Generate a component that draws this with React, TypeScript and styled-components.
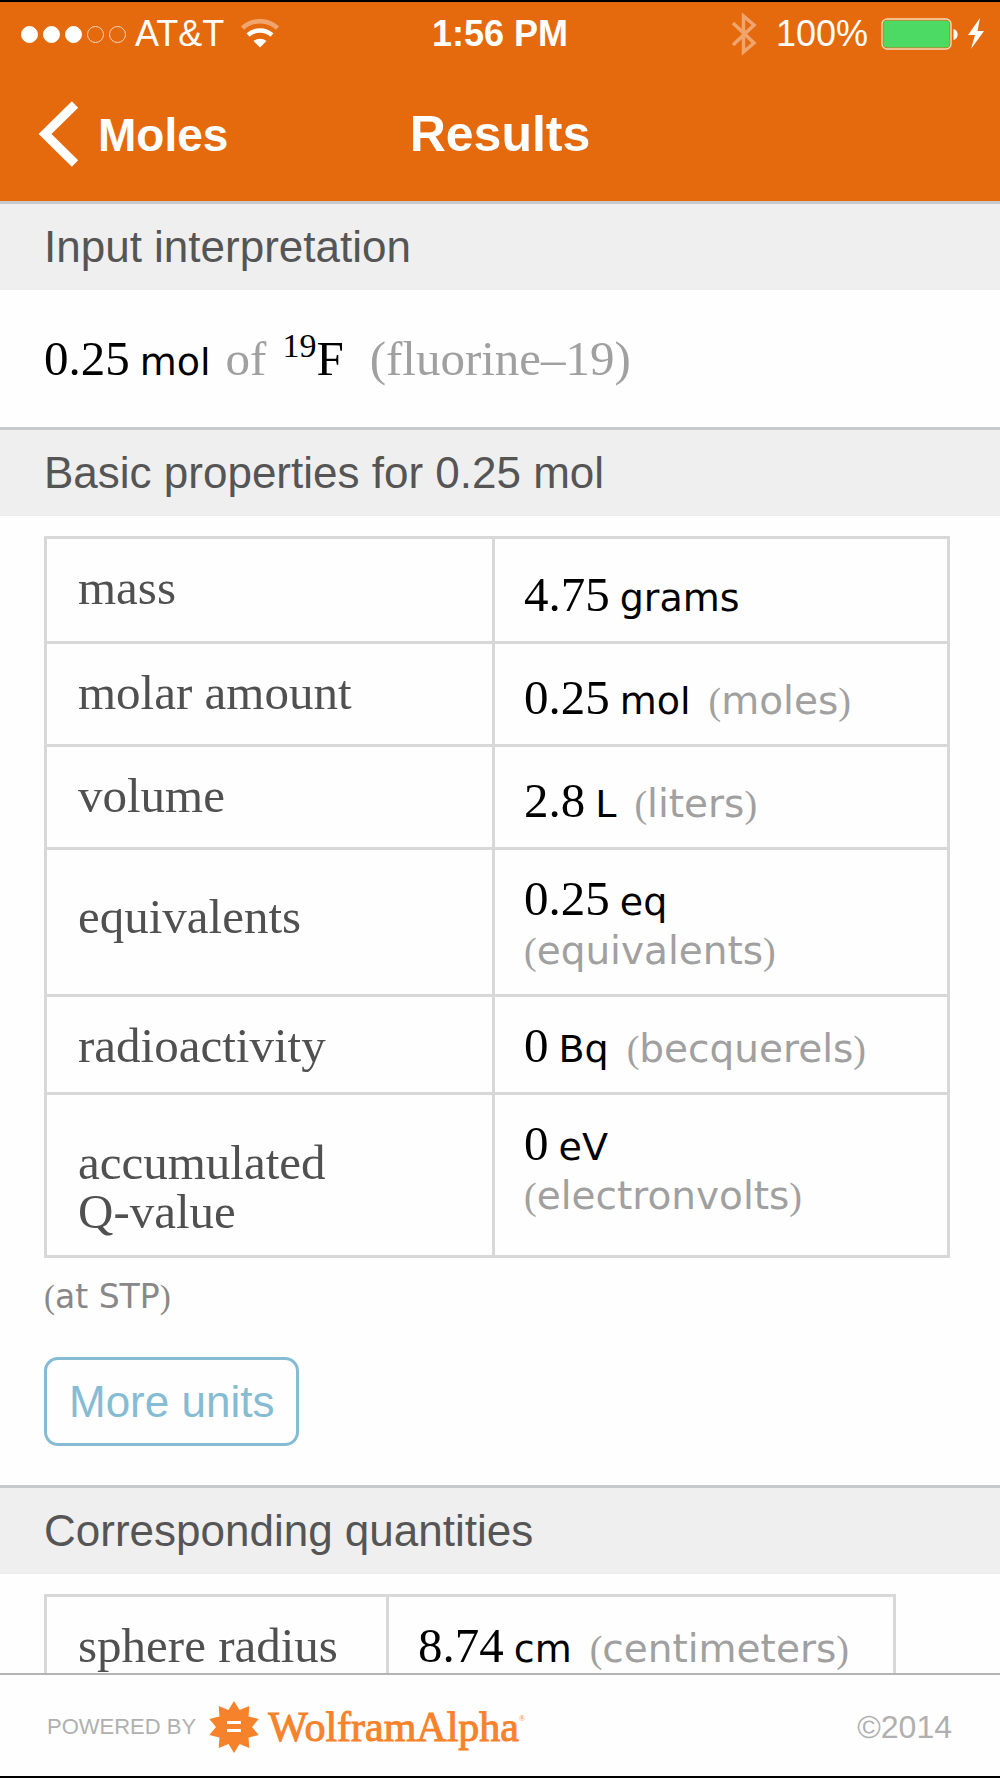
import React from "react";
import styled, { createGlobalStyle } from "styled-components";

const sans = `"Liberation Sans", Arial, sans-serif`;
const serif = `"Liberation Serif", "Times New Roman", serif`;
const unitSans = `"DejaVu Sans", Verdana, sans-serif`;

const GlobalStyle = createGlobalStyle`
  *, *::before, *::after { box-sizing: border-box; }
  body { margin: 0; background: #000; }
`;

const Screen = styled.div`
  display: flex;
  flex-direction: column;
  height: 100vh;
  border-top: 2px solid #000;
  border-bottom: 2px solid #000;
  background: #fefefe;
  font-family: ${sans};
`;

const Header = styled.header`
  flex: none;
  background: #e5690d;
  color: #fff;
`;

const StatusBar = styled.div`
  display: grid;
  grid-template-columns: minmax(0, 1fr) auto minmax(0, 1fr);
  align-items: center;
  height: 64px;
  padding: 0 15px;
  font-size: 36px;
  line-height: 40px;
`;

const StatusGroup = styled.div<{ $end?: boolean }>`
  display: flex;
  align-items: center;
  justify-content: ${(p) => (p.$end ? "flex-end" : "flex-start")};
`;

const Signal = styled.div`
  display: flex;
  gap: 5px;
  margin: 0 9px 0 6px;
`;

const Dot = styled.span<{ $on: boolean }>`
  width: 17px;
  height: 17px;
  border-radius: 50%;
  border: 1px solid ${(p) => (p.$on ? "#fff" : "#f8d6bc")};
  background: ${(p) => (p.$on ? "#fff" : "transparent")};
`;

const Time = styled.time`
  font-weight: 700;
`;

const Icon = styled.svg<{ $left?: number }>`
  display: block;
  flex: none;
  margin-left: ${(p) => p.$left ?? 0}px;
`;

const Percent = styled.span`
  margin: 0 13px 0 19px;
`;

const NavBar = styled.nav`
  display: grid;
  grid-template-columns: 1fr auto 1fr;
  align-items: center;
  height: 135px;
  padding: 0 38px;
`;

const BackButton = styled.button`
  display: flex;
  align-items: center;
  justify-self: start;
  gap: 18px;
  padding: 0;
  border: 0;
  background: none;
  color: inherit;
  font: 700 46px/58px ${sans};
`;

const NavLabel = styled.span`
  padding-top: 2px;
`;

const Title = styled.h1`
  margin: 0;
  font-size: 50px;
  line-height: 58px;
`;

const Main = styled.main`
  flex: 1;
  min-height: 0;
  overflow-y: auto;
  scrollbar-width: none;
`;

const SectionTitle = styled.h2`
  margin: 0;
  padding: 0 44px;
  border-top: 3px solid #c6cacd;
  border-bottom: 1px solid #ebecee;
  background: #efefef;
  color: #555;
  font-size: 44px;
  font-weight: 400;
  line-height: 85px;
`;

const SectionBody = styled.div`
  padding: 20px 50px 39px 44px;
`;

const Interpretation = styled.p`
  margin: 0;
  padding: 44px;
  color: #000;
  font-family: ${serif};
  font-size: 49px;
  line-height: 49px;
`;

const Muted = styled.span<{ $left: number }>`
  margin-left: ${(p) => p.$left}px;
  color: #a0a0a0;
`;

const Isotope = styled.sup`
  margin-left: 16px;
  font-size: 34px;
  line-height: 0;
  vertical-align: 18px;
`;

const Unit = styled.span`
  margin-left: 10px;
  font-family: ${unitSans};
  font-size: 38px;
  line-height: 0;
`;

const HintBox = styled.span<{ $stacked?: boolean }>`
  display: ${(p) => (p.$stacked ? "block" : "inline")};
  margin-left: ${(p) => (p.$stacked ? 0 : 18)}px;
  color: #a0a0a0;
  white-space: nowrap;
`;

const Paren = styled.span`
  font-family: ${serif};
  font-size: 38px;
  line-height: 0;
`;

const HintWord = styled.span`
  font-family: ${unitSans};
  font-size: 39px;
  line-height: 0;
`;

const Table = styled.table<{ $width: string }>`
  width: ${(p) => p.$width};
  border-collapse: collapse;
  table-layout: fixed;
  font-family: ${serif};
  font-size: 49px;
  line-height: 49px;
`;

type Align = "top" | "middle" | "bottom";

const Row = styled.tr<{ $height: number }>`
  height: ${(p) => p.$height}px;
`;

const LabelCell = styled.th<{ $align: Align; $width: string }>`
  width: ${(p) => p.$width};
  padding: 24px 30px ${(p) => (p.$align === "middle" ? 36 : 19)}px 31px;
  border: 3px solid #d8d8d8;
  color: #505050;
  font-weight: 400;
  text-align: left;
  white-space: pre-line;
  vertical-align: ${(p) => p.$align};
`;

const ValueCell = styled.td<{ $align: Align }>`
  padding: 24px 29px 22px;
  border: 3px solid #d8d8d8;
  color: #000;
  vertical-align: ${(p) => p.$align};
`;

const Note = styled.p`
  margin: 14px 0 36px;
  color: #888;
  font-family: ${unitSans};
  font-size: 33px;
  line-height: 49px;
`;

const NoteParen = styled.span`
  font-family: ${serif};
  line-height: 0;
`;

const MoreButton = styled.button`
  display: block;
  padding: 0 22px;
  border: 3px solid #85bcd3;
  border-radius: 14px;
  background: #fefefe;
  color: #85bcd3;
  font: 400 44px/83px ${sans};
`;

const Footer = styled.footer`
  display: flex;
  flex: none;
  align-items: center;
  height: 103px;
  padding: 3px 48px 0 47px;
  border-top: 2px solid #b3b3b3;
  background: #fefefe;
  color: #b0b0b0;
`;

const Powered = styled.span`
  font-size: 22px;
`;

const BrandLink = styled.a`
  display: flex;
  align-items: center;
  gap: 8px;
  margin-left: 12px;
  color: #f6832b;
  text-decoration: none;
`;

const Wordmark = styled.span`
  font-family: ${serif};
  font-size: 42px;
  line-height: 48px;
  -webkit-text-stroke: 1px #f6832b;
`;

const Registered = styled.sup`
  font-size: 8px;
  line-height: 0;
  vertical-align: 20px;
  -webkit-text-stroke: 0;
`;

const Copyright = styled.span`
  margin-left: auto;
  font-size: 32px;
`;

interface Property {
  label: string;
  amount: string;
  unit: string;
  hint?: string;
  stacked?: boolean;
  height: number;
  labelAlign: Align;
  valueAlign: Align;
}

const basicProperties: Property[] = [
  { label: "mass", amount: "4.75", unit: "grams", height: 105, labelAlign: "top", valueAlign: "bottom" },
  { label: "molar amount", amount: "0.25", unit: "mol", hint: "moles", height: 103, labelAlign: "top", valueAlign: "bottom" },
  { label: "volume", amount: "2.8", unit: "L", hint: "liters", height: 103, labelAlign: "top", valueAlign: "bottom" },
  { label: "equivalents", amount: "0.25", unit: "eq", hint: "equivalents", stacked: true, height: 147, labelAlign: "middle", valueAlign: "top" },
  { label: "radioactivity", amount: "0", unit: "Bq", hint: "becquerels", height: 98, labelAlign: "top", valueAlign: "top" },
  { label: "accumulated\nQ-value", amount: "0", unit: "eV", hint: "electronvolts", stacked: true, height: 163, labelAlign: "bottom", valueAlign: "top" },
];

const quantities: Property[] = [
  { label: "sphere radius", amount: "8.74", unit: "cm", hint: "centimeters", height: 103, labelAlign: "top", valueAlign: "top" },
];

function PropertyTable({ rows, width, labelWidth }: { rows: Property[]; width: string; labelWidth: string }) {
  return (
    <Table $width={width}>
      <tbody>
        {rows.map((r) => (
          <Row key={r.label} $height={r.height}>
            <LabelCell scope="row" $align={r.labelAlign} $width={labelWidth}>
              {r.label}
            </LabelCell>
            <ValueCell $align={r.valueAlign}>
              {r.amount}
              <Unit>{r.unit}</Unit>
              {r.hint && (
                <HintBox $stacked={r.stacked}>
                  <Paren>(</Paren>
                  <HintWord>{r.hint}</HintWord>
                  <Paren>)</Paren>
                </HintBox>
              )}
            </ValueCell>
          </Row>
        ))}
      </tbody>
    </Table>
  );
}

// Ten-pointed star: outer and inner vertices alternate every 18 degrees.
const starPoints = Array.from({ length: 20 }, (_, i) => {
  const radius = i % 2 === 0 ? 26 : 18;
  const angle = (i * Math.PI) / 10 - Math.PI / 2;
  return `${(26 + radius * Math.cos(angle)).toFixed(2)},${(26 + radius * Math.sin(angle)).toFixed(2)}`;
}).join(" ");

export default function App() {
  return (
    <>
      <GlobalStyle />
      <Screen>
        <Header>
          <StatusBar>
            <StatusGroup>
              <Signal role="img" aria-label="Signal strength">
                {[true, true, true, false, false].map((on, i) => (
                  <Dot key={i} $on={on} />
                ))}
              </Signal>
              <span>AT&amp;T</span>
              <Icon $left={16} width="40" height="30" viewBox="0 0 40 30" fill="none" aria-hidden="true">
                <path d="M2.5 9 A26 26 0 0 1 37.5 9" stroke="#fff" strokeOpacity=".4" strokeWidth="4.5" />
                <path d="M8 16 A18 18 0 0 1 32 16" stroke="#fff" strokeWidth="4.5" />
                <path d="M20 28.5 L13.5 22 A11 11 0 0 1 26.5 22 Z" fill="#fff" />
              </Icon>
            </StatusGroup>
            <Time>1:56 PM</Time>
            <StatusGroup $end>
              <Icon width="26" height="44" viewBox="0 0 26 44" fill="none" aria-hidden="true">
                <path d="M2 11 L23 31 L12.5 40 V4 L23 13 L2 33" stroke="#fff" strokeOpacity=".4" strokeWidth="3.5" />
              </Icon>
              <Percent>100%</Percent>
              <Icon width="78" height="32" viewBox="0 0 78 32" aria-hidden="true">
                <rect x="1" y="1" width="69" height="30" rx="5" fill="none" stroke="#fbd9b8" strokeWidth="1.4" />
                <rect x="2.5" y="2.5" width="66" height="27" rx="3.5" fill="#4cd964" />
                <path d="M72.5 11 C78 12 78 21 72.5 22 Z" fill="#fff" />
              </Icon>
              <Icon $left={8} width="18" height="32" viewBox="0 0 18 32" fill="#fff" aria-hidden="true">
                <path d="M13 0 L1 17 H8 L4 31 L17 13 H10.5 Z" />
              </Icon>
            </StatusGroup>
          </StatusBar>
          <NavBar>
            <BackButton type="button">
              <Icon width="42" height="66" viewBox="0 0 42 66" fill="none" aria-hidden="true">
                <path d="M37 3.5 L7 33 L37 62.5" stroke="#fff" strokeWidth="9" />
              </Icon>
              <NavLabel>Moles</NavLabel>
            </BackButton>
            <Title>Results</Title>
          </NavBar>
        </Header>

        <Main>
          <section>
            <SectionTitle>Input interpretation</SectionTitle>
            <Interpretation>
              0.25<Unit>mol</Unit>
              <Muted $left={15}>of</Muted>
              <Isotope>19</Isotope>F<Muted $left={26}>(fluorine–19)</Muted>
            </Interpretation>
          </section>

          <section>
            <SectionTitle>Basic properties for 0.25 mol</SectionTitle>
            <SectionBody>
              <PropertyTable rows={basicProperties} width="100%" labelWidth="448px" />
              <Note>
                <NoteParen>(</NoteParen>at STP<NoteParen>)</NoteParen>
              </Note>
              <MoreButton type="button">More units</MoreButton>
            </SectionBody>
          </section>

          <section>
            <SectionTitle>Corresponding quantities</SectionTitle>
            <SectionBody>
              <PropertyTable rows={quantities} width="94%" labelWidth="342px" />
            </SectionBody>
          </section>
        </Main>

        <Footer>
          <Powered>POWERED BY</Powered>
          <BrandLink href="#wolframalpha">
            <Icon width="52" height="52" viewBox="0 0 52 52" aria-hidden="true">
              <polygon points={starPoints} fill="#f6832b" />
              <rect x="19" y="20" width="14" height="3" fill="#fff" />
              <rect x="19" y="28" width="14" height="3" fill="#fff" />
            </Icon>
            <Wordmark>
              WolframAlpha<Registered>®</Registered>
            </Wordmark>
          </BrandLink>
          <Copyright>©2014</Copyright>
        </Footer>
      </Screen>
    </>
  );
}
